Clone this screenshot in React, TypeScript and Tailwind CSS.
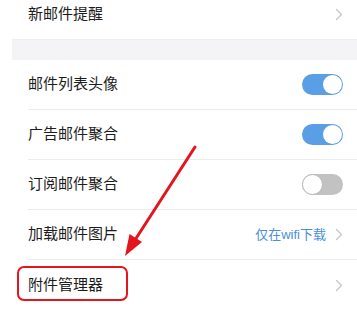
import { ReactNode } from "react";

function Chevron() {
  return (
    <svg width="8" height="13" viewBox="0 0 8 13" className="shrink-0">
      <polyline
        points="1.5,1.5 6.5,6.5 1.5,11.5"
        fill="none"
        stroke="#c8c8cc"
        strokeWidth="1.4"
        strokeLinecap="round"
        strokeLinejoin="round"
      />
    </svg>
  );
}

function Toggle({ on }: { on: boolean }) {
  return on ? (
    <div className="w-[41px] h-[21px] rounded-full bg-[#5a9ee6] flex items-center justify-end px-[1px]">
      <div className="w-[19px] h-[19px] rounded-full bg-white" />
    </div>
  ) : (
    <div className="w-[41px] h-[21px] rounded-full bg-[#c2c2c2] flex items-center justify-start">
      <div className="w-[21px] h-[21px] rounded-full bg-white border border-[#b9b9b9]" />
    </div>
  );
}

function Row({
  label,
  right,
  last = false,
}: {
  label: string;
  right: ReactNode;
  last?: boolean;
}) {
  return (
    <div className={last ? "border-b border-[#e6e6e6]" : ""}>
      <div
        className={
          "ml-4 h-[50px] flex items-center justify-between pr-[14px] " +
          (last ? "" : "border-b border-[#ececec]")
        }
      >
        <span className="text-[15px] text-[#1c1c1c]">{label}</span>
        {right}
      </div>
    </div>
  );
}

export default function App() {
  const items = [
    { label: "邮件列表头像", right: <Toggle on /> },
    { label: "广告邮件聚合", right: <Toggle on /> },
    { label: "订阅邮件聚合", right: <Toggle on={false} /> },
    {
      label: "加载邮件图片",
      right: (
        <div className="flex items-center gap-[9px]">
          <span className="text-[13px] text-[#4a8fd8]">仅在wifi下载</span>
          <Chevron />
        </div>
      ),
    },
  ];

  return (
    <div
      className="relative w-[357px] h-[309px] overflow-hidden bg-white"
      style={{ fontFamily: '"Liberation Sans", "Noto Sans CJK SC", sans-serif' }}
    >
      <div className="ml-3 -mt-[11px]">
        {/* first group */}
        <div className="ml-4 h-[50px] flex items-center justify-between pr-[14px]">
          <span className="text-[15px] text-[#1c1c1c]">新邮件提醒</span>
          <Chevron />
        </div>
        <div className="h-[21px] bg-[#f4f4f6] border-t border-[#efeff1]" />

        {/* second group */}
        {items.map((it) => (
          <Row key={it.label} label={it.label} right={it.right} />
        ))}
        <Row label="附件管理器" right={<Chevron />} last />
      </div>

      {/* annotation overlay */}
      <div className="absolute left-[17px] top-[266px] w-[111px] h-[35px] border-2 border-[#e3151d] rounded-[7px]" />
      <svg
        className="absolute left-0 top-0 pointer-events-none"
        width="357"
        height="309"
        viewBox="0 0 357 309"
      >
        <line x1="195" y1="147" x2="135" y2="240" stroke="#e3151d" strokeWidth="3" strokeLinecap="round" />
        <polygon points="125,256 129.5,234 142,242" fill="#e3151d" />
      </svg>
    </div>
  );
}
